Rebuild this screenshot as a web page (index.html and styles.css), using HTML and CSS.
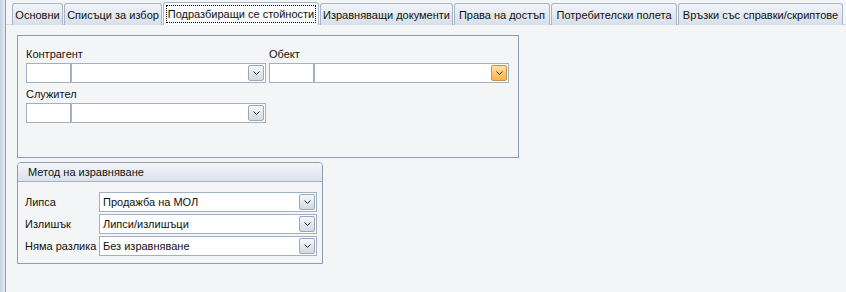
FILE: index.html
```html
<!DOCTYPE html>
<html lang="bg">
<head>
  <meta charset="UTF-8">
  <title>Подразбиращи се стойности</title>
  <link rel="stylesheet" href="styles.css">
</head>
<body>
  <div class="frame">
    <div class="side"></div>
    <div class="main">
      <div class="tabs">
        <div class="tab tab-main">Основни</div>
        <div class="tab tab-lists">Списъци за избор</div>
        <div class="tab tab-defaults active"><span class="focus">Подразбиращи се стойности</span></div>
        <div class="tab tab-docs">Изравняващи документи</div>
        <div class="tab tab-rights">Права на достъп</div>
        <div class="tab tab-fields">Потребителски полета</div>
        <div class="tab tab-links">Връзки със справки/скриптове</div>
      </div>

      <div class="page">
        <div class="group defaults">
          <div class="field">
            <div class="label">Контрагент</div>
            <div class="lookup">
              <div class="code"></div>
              <div class="combo"><span class="value"></span><span class="drop"><svg viewBox="0 0 7 4"><path d="M0.5 0.5 L3.5 3.5 L6.5 0.5"/></svg></span></div>
            </div>
          </div>
          <div class="field">
            <div class="label">Обект</div>
            <div class="lookup">
              <div class="code"></div>
              <div class="combo"><span class="value"></span><span class="drop hot"><svg viewBox="0 0 7 4"><path d="M0.5 0.5 L3.5 3.5 L6.5 0.5"/></svg></span></div>
            </div>
          </div>
          <div class="field">
            <div class="label">Служител</div>
            <div class="lookup">
              <div class="code"></div>
              <div class="combo"><span class="value"></span><span class="drop"><svg viewBox="0 0 7 4"><path d="M0.5 0.5 L3.5 3.5 L6.5 0.5"/></svg></span></div>
            </div>
          </div>
        </div>

        <div class="group method">
          <div class="group-head">Метод на изравняване</div>
          <div class="group-body">
            <div class="row">
              <div class="row-label">Липса</div>
              <div class="combo"><span class="value">Продажба на МОЛ</span><span class="drop"><svg viewBox="0 0 7 4"><path d="M0.5 0.5 L3.5 3.5 L6.5 0.5"/></svg></span></div>
            </div>
            <div class="row">
              <div class="row-label">Излишък</div>
              <div class="combo"><span class="value">Липси/излишъци</span><span class="drop"><svg viewBox="0 0 7 4"><path d="M0.5 0.5 L3.5 3.5 L6.5 0.5"/></svg></span></div>
            </div>
            <div class="row">
              <div class="row-label">Няма разлика</div>
              <div class="combo"><span class="value">Без изравняване</span><span class="drop"><svg viewBox="0 0 7 4"><path d="M0.5 0.5 L3.5 3.5 L6.5 0.5"/></svg></span></div>
            </div>
          </div>
        </div>
      </div>
    </div>
  </div>
</body>
</html>
```

FILE: styles.css
```css
* {margin: 0; padding: 0; box-sizing: border-box;}
body {
  font-family: 'Liberation Sans', Arial, sans-serif;
  font-size: 11px;
  color: #111;
  background: #f4f5f7;
  overflow: hidden;
}
.frame {
  display: flex;
  height: 292px;
}
.side {
  width: 5px;
  flex-shrink: 0;
  background: linear-gradient(to right, #c3cfdf, #d9e1ec 70%, #eef1f6);
}
.main {
  flex: 1;
  min-width: 0;
  display: flex;
  flex-direction: column;
  border-left: 1px solid #8e9cb0;
}

/* tab strip */
.tabs {
  display: flex;
  gap: 1px;
  padding: 2px 0 0 6px;
  height: 25px;
  border-bottom: 1px solid #d3d9e2;
}
.tab {
  height: 22px;
  display: flex;
  align-items: center;
  justify-content: center;
  border: 1px solid #a9b6c8;
  border-bottom: none;
  border-radius: 3px 3px 0 0;
  background: linear-gradient(#f1f4f8, #d8dfe9);
  white-space: nowrap;
  margin-top: 1px;
}
.tab-main {width: 51px;}
.tab-lists {width: 98px;}
.tab-defaults {width: 156px;}
.tab-docs {width: 133px;}
.tab-rights {width: 96px;}
.tab-fields {width: 126px;}
.tab-links {width: 165px;}
.tab.active {
  background: #fbfcfd;
  height: 23px;
  margin-top: 0;
  padding: 0 2px;
}
.focus {
  flex: 1;
  text-align: center;
  border: 1px dotted #000;
  padding: 2px 0;
}

.page {
  flex: 1;
  padding: 10px 11px;
}
.group {
  border: 1px solid #8d9db3;
}
.defaults {
  width: 502px;
  height: 123px;
  padding: 11px 0 0 8px;
  display: grid;
  grid-template-columns: 240px 240px;
  column-gap: 3px;
  row-gap: 4px;
  align-content: start;
}
.label {
  line-height: 14px;
  margin-bottom: 2px;
}
.lookup {
  display: flex;
  height: 20px;
}
.code {
  width: 45px;
  border: 1px solid #a2b0c3;
  background: #fff;
}
.lookup .combo {
  flex: 1;
}
.combo {
  display: flex;
  align-items: center;
  justify-content: space-between;
  height: 20px;
  border: 1px solid #a2b0c3;
  background: #fff;
  padding: 0 1px 0 3px;
  white-space: nowrap;
}
.drop {
  width: 16px;
  height: 16px;
  display: flex;
  align-items: center;
  justify-content: center;
  border: 1px solid #9aa7b9;
  border-radius: 2px;
  background: linear-gradient(#f6f8fa, #d3d9e2);
}
.drop svg {
  width: 7px;
  height: 4px;
  fill: none;
  stroke: #1e2630;
  stroke-width: 1;
}
.drop.hot {
  border-color: #c7924a;
  background: linear-gradient(#ffe2a4, #ffb247);
}

.method {
  width: 306px;
  margin-top: 4px;
  border-radius: 4px 4px 0 0;
}
.group-head {
  height: 19px;
  line-height: 18px;
  padding-left: 10px;
  border-bottom: 1px solid #a3b1c4;
  border-radius: 3px 3px 0 0;
  background: linear-gradient(#f3f6f9, #dbe2eb);
}
.group-body {
  padding: 10px 5px 7px 7px;
  display: flex;
  flex-direction: column;
  gap: 2px;
}
.row {
  display: flex;
  align-items: center;
}
.row-label {
  width: 74px;
  white-space: nowrap;
}
.row .combo {
  flex: 1;
}
```
